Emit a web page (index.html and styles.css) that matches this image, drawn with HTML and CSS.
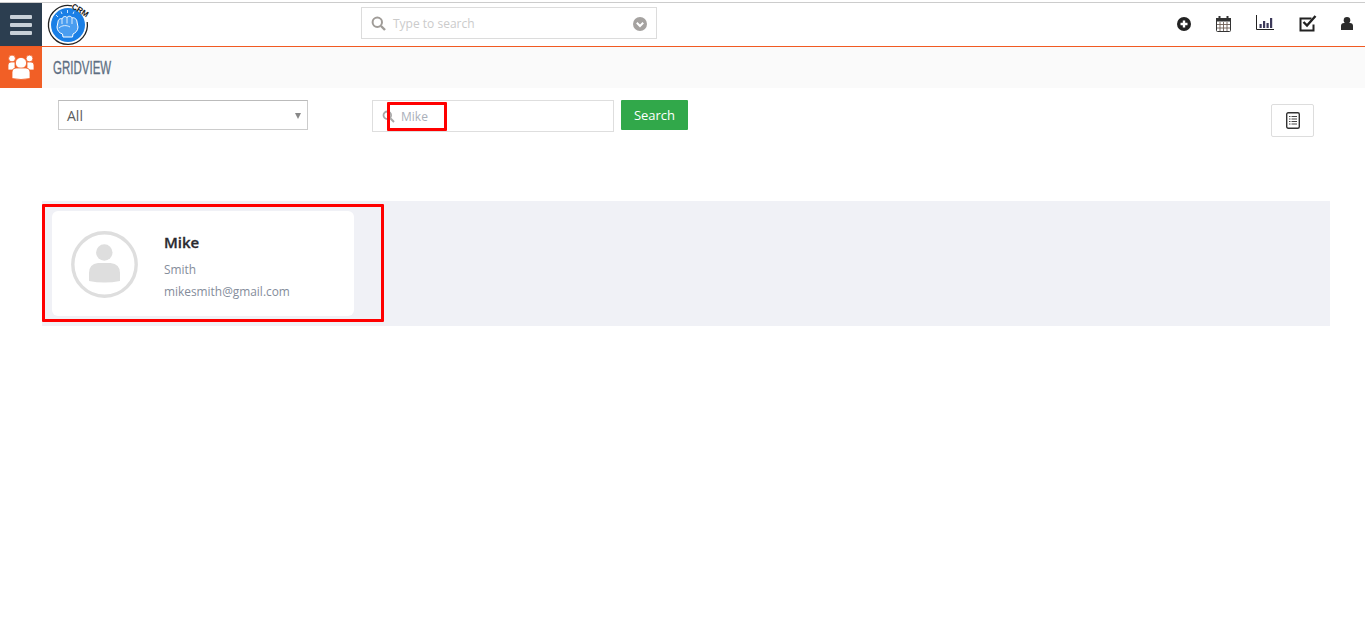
FILE: index.html
```html
<!DOCTYPE html>
<html lang="en">
<head>
<meta charset="utf-8">
<title>Gridview</title>
<link rel="stylesheet" href="styles.css">
</head>
<body>
<header class="topbar">
  <button class="menu-btn" aria-label="Menu">
    <span class="bar"></span><span class="bar"></span><span class="bar"></span>
  </button>
  <div class="logo">
    <svg width="44" height="44" viewBox="0 0 44 44">
      <path d="M26 3.800A19.500 19.500 0 1 0 41.200 20" fill="none" stroke="#222" stroke-width="1.300"/>
      <circle cx="22" cy="23" r="17" fill="#1a7fe6"/>
      <path d="M12 20C12 17 15 16 16 17C17 14 20 14 21 15.500C22 13.500 25.500 14 26 16C28 15 31 17 31 20L32 25C32 29 29 31 27 32L26.500 35H17L16.500 32C13 31 11 28 11 25Z" fill="#4a9df0" stroke="#fff" stroke-width="1"/>
      <path d="M16 17v5M21 15.500v6M26 16v6M13 26C16 23 21 23 24 25" fill="none" stroke="#fff" stroke-width=".8"/>
      <path d="M21.500 8v3M15 9.500l1 2.500M28 9.500l-1 2.500M10 13l2 2" stroke="#cfe6ff" stroke-width="1"/>
    </svg>
    <span class="logo-text">CRM</span>
  </div>
  <div class="global-search">
    <svg class="gs-icon" width="15" height="15" viewBox="0 0 15 15"><circle cx="6.300" cy="6.300" r="4.700" fill="none" stroke="#a09c98" stroke-width="2"/><path d="M10 10l4 4" stroke="#a09c98" stroke-width="2.400"/></svg>
    <span class="gs-text">Type to search</span>
    <svg class="gs-caret" width="14" height="14" viewBox="0 0 14 14"><circle cx="7" cy="7" r="7" fill="#a5a2a0"/><path d="M3.800 5.800L7 9l3.200-3.200" fill="none" stroke="#fff" stroke-width="2"/></svg>
  </div>
  <nav class="top-icons">
    <svg width="14" height="14" viewBox="0 0 14 14"><circle cx="7" cy="7" r="7" fill="#222"/><path d="M7 3.500v7M3.500 7h7" stroke="#fff" stroke-width="2.400"/></svg>
    <svg width="15" height="16" viewBox="0 0 15 16"><rect x=".5" y="2.500" width="14" height="13" rx="1" fill="#fff" stroke="#333"/><rect x="0" y="2" width="15" height="3.500" fill="#333"/><path d="M3.500 0v3.500M11.500 0v3.500" stroke="#333" stroke-width="2"/><path d="M4 6v9M7.500 6v9M11 6v9M1 8.500h13M1 12h13" stroke="#6e5f55" stroke-width=".9"/></svg>
    <svg width="18" height="15" viewBox="0 0 18 15"><path d="M.5 0v14.500H18" fill="none" stroke="#222"/><path d="M3.500 9h2.200v4H3.500zM7 6h2.200v7H7zM10.500 8h2.200v5h-2.200zM14 3h2.200v10H14z" fill="#3d3a5a"/></svg>
    <svg width="18" height="17" viewBox="0 0 18 17"><path d="M14.500 9.500V15.500H1.500V3.500h11" fill="none" stroke="#222" stroke-width="2"/><path d="M4.500 7l3.500 3.500 8.500-9.500" fill="none" stroke="#222" stroke-width="2.400"/></svg>
    <svg width="12" height="13" viewBox="0 0 12 13"><circle cx="6" cy="3.300" r="3.300" fill="#2b2b2b"/><path d="M0 13V9q0-3 3-3h6q3 0 3 3v4z" fill="#2b2b2b"/></svg>
  </nav>
</header>

<section class="subheader">
  <div class="sub-icon">
    <svg width="26" height="25" viewBox="0 0 26 25" fill="#fff" stroke="#f15f26" stroke-width=".8">
      <circle cx="4" cy="3.500" r="3.400"/><circle cx="21.500" cy="3.500" r="3.400"/>
      <path d="M0 15V10q0-3 3-3h4v8z"/><path d="M26 15V10q0-3-3-3h-4v8z"/>
      <circle cx="13" cy="8" r="5.600"/>
      <path d="M4 23.500V17q0-4 4-4h10q4 0 4 4v6.500q-9 2-18 0z"/>
    </svg>
  </div>
  <h1 class="sub-title">GRIDVIEW</h1>
</section>

<section class="filters">
  <div class="select-box"><span>All</span><i class="select-caret"></i></div>
  <div class="search-group">
    <div class="search-input">
      <svg width="13" height="13" viewBox="0 0 13 13"><circle cx="5.300" cy="5.300" r="3.800" fill="none" stroke="#a8a8a8" stroke-width="1.800"/><path d="M8.300 8.300l3.700 3.700" stroke="#a8a8a8" stroke-width="2"/></svg>
      <span>Mike</span>
      <div class="mark mark-input"></div>
    </div>
    <button class="search-btn">Search</button>
  </div>
  <button class="view-btn" aria-label="List view">
    <svg width="14" height="17" viewBox="0 0 14 17"><rect x=".7" y=".7" width="12.600" height="15.600" rx="1.500" fill="#fff" stroke="#333" stroke-width="1.400"/><path d="M3 4.500h1.500M3 7h1.500M3 9.500h1.500M3 12h1.500M5.500 4.500H11M5.500 7H11M5.500 9.500H11M5.500 12H11" stroke="#444"/></svg>
  </button>
</section>

<section class="grid-panel">
  <article class="card">
    <div class="avatar">
      <svg width="67" height="67" viewBox="0 0 67 67"><circle cx="33.500" cy="33.500" r="31.700" fill="#fff" stroke="#dedede" stroke-width="3.400"/><circle cx="33.300" cy="21.500" r="8.200" fill="#dedede"/><path d="M18 50V42q0-9 9-10h12.500q9.500 1 9.500 10v8q-15.500 3-31 0z" fill="#dedede"/></svg>
    </div>
    <div class="info">
      <div class="name">Mike</div>
      <div class="meta">Smith</div>
      <div class="meta">mikesmith@gmail.com</div>
    </div>
  </article>
  <div class="mark mark-card"></div>
</section>
</body>
</html>
```
FILE: styles.css
```css
* { box-sizing: border-box; }
html, body { margin: 0; padding: 0; }
body { width: 1365px; height: 644px; background: #fff; font-family: "Open Sans", sans-serif; overflow: hidden; }

.topbar { display: flex; align-items: flex-start; margin-top: 2px; border-top: 1px solid #ccc; border-bottom: 1px solid #f15a22; position: relative; background: #fff; height: 45px; }
.menu-btn { width: 42px; height: 43px; border: 0; padding: 0; background: #2c3e50; display: flex; flex-direction: column; justify-content: center; align-items: center; gap: 4px; flex: none; }
.bar { display: block; width: 22px; height: 4px; border-radius: 1px; background: #c8d0d8; }
.logo { width: 46px; height: 43px; margin-left: 4px; flex: none; position: relative; }
.logo svg { display: block; margin-top: -1px; }
.logo-text { position: absolute; left: 25px; top: 3px; font-size: 8px; line-height: 9px; font-weight: 700; color: #222; transform: rotate(32deg); font-family: "Liberation Sans", sans-serif; }
.global-search { width: 296px; height: 32px; margin-left: 269px; margin-top: 4px; border: 1px solid #dcdcdc; display: flex; align-items: center; padding: 0 9px; flex: none; }
.gs-text { font-size: 12px; color: #cbcbcb; margin-left: 7px; flex: 1; }
.gs-caret { margin-top: 2px; }
.top-icons { position: absolute; right: 0; top: 0; height: 43px; width: 188px; }
.top-icons svg { position: absolute; top: 13px; }
.top-icons svg:nth-child(1) { left: 0; top: 14px; }
.top-icons svg:nth-child(2) { left: 39px; }
.top-icons svg:nth-child(3) { left: 79px; top: 12px; }
.top-icons svg:nth-child(4) { left: 122px; top: 12px; }
.top-icons svg:nth-child(5) { left: 164px; top: 14px; }

.subheader { display: flex; align-items: center; height: 41px; background: #fafafa; }
.sub-icon { width: 42px; height: 41px; background: #f15f26; display: flex; align-items: center; justify-content: center; flex: none; }
.sub-title { margin: 2px 0 0 11px; font-family: "Liberation Sans", sans-serif; font-size: 18px; font-weight: 400; color: #5e6f82; transform: scaleX(.64); transform-origin: left center; -webkit-text-stroke: .3px #5e6f82; }

.filters { position: relative; display: flex; align-items: flex-start; padding: 12px 51px 0 58px; height: 113px; }
.select-box { width: 250px; height: 30px; border: 1px solid #ccc; border-top-color: #bbb; display: flex; align-items: center; justify-content: space-between; padding: 0 8px; font-size: 14px; color: #5c5c5c; }
.select-caret { width: 0; height: 0; border-left: 3.500px solid transparent; border-right: 3.500px solid transparent; border-top: 6px solid #888; margin: 2px -2px 0 0; }
.search-group { display: flex; align-items: flex-start; gap: 7px; margin-left: 64px; }
.search-input { position: relative; width: 242px; height: 32px; border: 1px solid #dedede; display: flex; align-items: center; padding-left: 9px; font-size: 12px; color: #aab0ba; }
.search-input span { margin-left: 6px; }
.search-btn { width: 67px; height: 30px; border: 0; border-radius: 1px; background: #31a84a; color: #fff; font-family: "Open Sans", sans-serif; font-size: 13px; padding: 0; }
.view-btn { margin-left: auto; margin-top: 4px; width: 43px; height: 33px; border: 1px solid #ddd; border-radius: 2px; background: #fff; display: flex; align-items: center; justify-content: center; padding: 0; }

.grid-panel { position: relative; margin-left: 42px; width: 1288px; height: 125px; padding: 10px; background: #f0f1f6; }
.card { width: 302px; height: 105px; background: #fff; border-radius: 6px; display: flex; align-items: flex-start; padding: 20px 0 0 19px; }
.avatar { width: 67px; height: 67px; flex: none; }
.avatar svg { display: block; }
.info { margin-left: 26px; }
.name { font-size: 15px; line-height: 22px; font-weight: 600; color: #2a2a30; -webkit-text-stroke: .3px #2a2a30; }
.meta { font-size: 11.900px; line-height: 22px; color: #858d9b; }
.name + .meta { margin-top: 5px; }

.mark { position: absolute; border: 3px solid #f00; border-radius: 1px; }
.mark-input { left: 14px; top: 1px; width: 60px; height: 29px; }
.mark-card { left: 0; top: 3px; width: 342px; height: 118px; }
```
